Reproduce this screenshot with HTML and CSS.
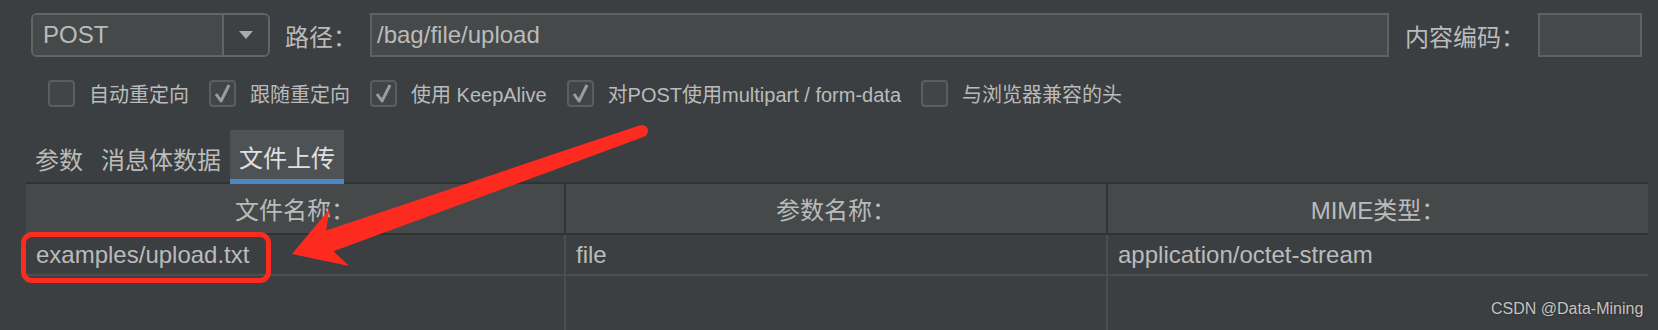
FILE: index.html
```html
<!DOCTYPE html>
<html lang="zh-CN">
<head>
<meta charset="utf-8">
<title>HTTP 请求 - 文件上传</title>
<link rel="stylesheet" href="styles.css">
</head>
<body>
<div class="app">
  <div class="req-row">
    <div class="combo">
      <span class="combo-value">POST</span>
      <span class="combo-btn"><svg width="14" height="8" viewBox="0 0 14 8"><polygon points="0,0 14,0 7,8" fill="#a9abad"/></svg></span>
    </div>
    <span class="field-label">路径：</span>
    <div class="text-field path">/bag/file/upload</div>
    <span class="field-label enc-label">内容编码：</span>
    <div class="text-field enc"></div>
  </div>

  <div class="options">
    <label class="opt"><span class="cb"></span><span>自动重定向</span></label>
    <label class="opt"><span class="cb"><svg width="23" height="23" viewBox="0 0 23 23"><polyline points="5,12 10,19 18,3" fill="none" stroke="#9a9c9e" stroke-width="3" stroke-linejoin="round"/></svg></span><span>跟随重定向</span></label>
    <label class="opt"><span class="cb"><svg width="23" height="23" viewBox="0 0 23 23"><polyline points="5,12 10,19 18,3" fill="none" stroke="#9a9c9e" stroke-width="3" stroke-linejoin="round"/></svg></span><span>使用 KeepAlive</span></label>
    <label class="opt"><span class="cb"><svg width="23" height="23" viewBox="0 0 23 23"><polyline points="5,12 10,19 18,3" fill="none" stroke="#9a9c9e" stroke-width="3" stroke-linejoin="round"/></svg></span><span>对POST使用multipart / form-data</span></label>
    <label class="opt"><span class="cb"></span><span>与浏览器兼容的头</span></label>
  </div>

  <div class="tabs">
    <div class="tab">参数</div>
    <div class="tab">消息体数据</div>
    <div class="tab active">文件上传</div>
  </div>

  <div class="table">
    <div class="thead">
      <div class="th">文件名称：</div>
      <div class="th">参数名称：</div>
      <div class="th">MIME类型：</div>
    </div>
    <div class="tr">
      <div class="td">examples/upload.txt</div>
      <div class="td">file</div>
      <div class="td">application/octet-stream</div>
    </div>
    <div class="tr filler">
      <div class="td"></div>
      <div class="td"></div>
      <div class="td"></div>
    </div>
  </div>

  <div class="highlight"></div>
  <svg class="arrow" width="1658" height="330" viewBox="0 0 1658 330">
    <polygon fill="#fd2b1f" points="292,254 349,266 333.4,251.3 644,136.7 640,125.3 326.2,230.5 329.4,209.2"/>
    <circle cx="642" cy="131" r="6" fill="#fd2b1f"/>
  </svg>
  <div class="watermark">CSDN @Data-Mining</div>
</div>
</body>
</html>
```
FILE: styles.css
```css
body {
  margin: 0;
  background: #3c3f41;
}

.app {
  position: relative;
  width: 1658px;
  height: 330px;
  overflow: hidden;
  background: #3c3f41;
  color: #bbbbbb;
  font-family: "Liberation Sans", "Noto Sans CJK SC", sans-serif;
  font-size: 24px;
}

/* request row */
.req-row {
  display: flex;
  align-items: center;
  height: 44px;
  padding: 13px 16px 0 31px;
}

.combo {
  width: 239px;
  height: 44px;
  box-sizing: border-box;
  border: 2px solid #626466;
  border-radius: 6px;
  display: flex;
  overflow: hidden;
  flex: none;
}

.combo-value {
  flex: 1;
  background: #45494a;
  padding-left: 10px;
  display: flex;
  align-items: center;
}

.combo-btn {
  width: 46px;
  box-sizing: border-box;
  border-left: 2px solid #626466;
  background: #3e4143;
  display: flex;
  align-items: center;
  justify-content: center;
}

.field-label {
  margin-left: 15px;
  margin-right: 13px;
  white-space: nowrap;
  flex: none;
}

.enc-label {
  margin-left: 16px;
}

.text-field {
  height: 44px;
  box-sizing: border-box;
  border: 2px solid #5f6163;
  background: #45494a;
  display: flex;
  align-items: center;
  padding-left: 5px;
}

.path {
  flex: 1;
}

.enc {
  width: 104px;
  flex: none;
}

/* options */
.options {
  display: flex;
  align-items: center;
  gap: 20px;
  height: 27px;
  padding: 23px 0 0 48px;
  font-size: 20px;
}

.opt {
  display: flex;
  align-items: center;
  gap: 14px;
  white-space: nowrap;
}

.cb {
  width: 27px;
  height: 27px;
  box-sizing: border-box;
  border: 2px solid #5b5e60;
  border-radius: 4px;
  background: #414547;
  display: flex;
  align-items: center;
  justify-content: center;
}

/* tabs */
.tabs {
  display: flex;
  height: 52px;
  margin: 23px 10px 0 26px;
  border-bottom: 2px solid #303234;
}

.tab {
  display: flex;
  align-items: center;
  padding: 4px 9px 0;
  white-space: nowrap;
}

.tab.active {
  background: #4e5254;
  color: #e0e0e0;
  border-bottom: 5px solid #4a88c7;
  margin-bottom: -2px;
}

/* table */
.table {
  margin: 0 10px 0 26px;
}

.thead,
.tr {
  display: grid;
  grid-template-columns: 540px 542px 1fr;
}

.thead {
  height: 49px;
  background: #45494a;
  border-bottom: 2px solid #2f3133;
}

.th {
  display: flex;
  align-items: center;
  justify-content: center;
  border-right: 2px solid #323537;
}

.th:last-child {
  border-right: none;
}

.tr {
  height: 39px;
  border-bottom: 2px solid #4b4e50;
}

.td {
  display: flex;
  align-items: center;
  padding-left: 10px;
  border-right: 2px solid #4b4e50;
  white-space: nowrap;
}

.td:last-child {
  border-right: none;
}

.tr.filler {
  height: 60px;
  border-bottom: none;
}

/* overlays */
.highlight {
  position: absolute;
  left: 21px;
  top: 232px;
  width: 250px;
  height: 51px;
  box-sizing: border-box;
  border: 5px solid #fd2b1f;
  border-radius: 11px;
}

.arrow {
  position: absolute;
  left: 0;
  top: 0;
}

.watermark {
  position: absolute;
  left: 1491px;
  top: 300px;
  font-size: 16px;
  color: #c4c4c4;
  text-shadow: 0 0 2px #222;
  white-space: nowrap;
}
```
